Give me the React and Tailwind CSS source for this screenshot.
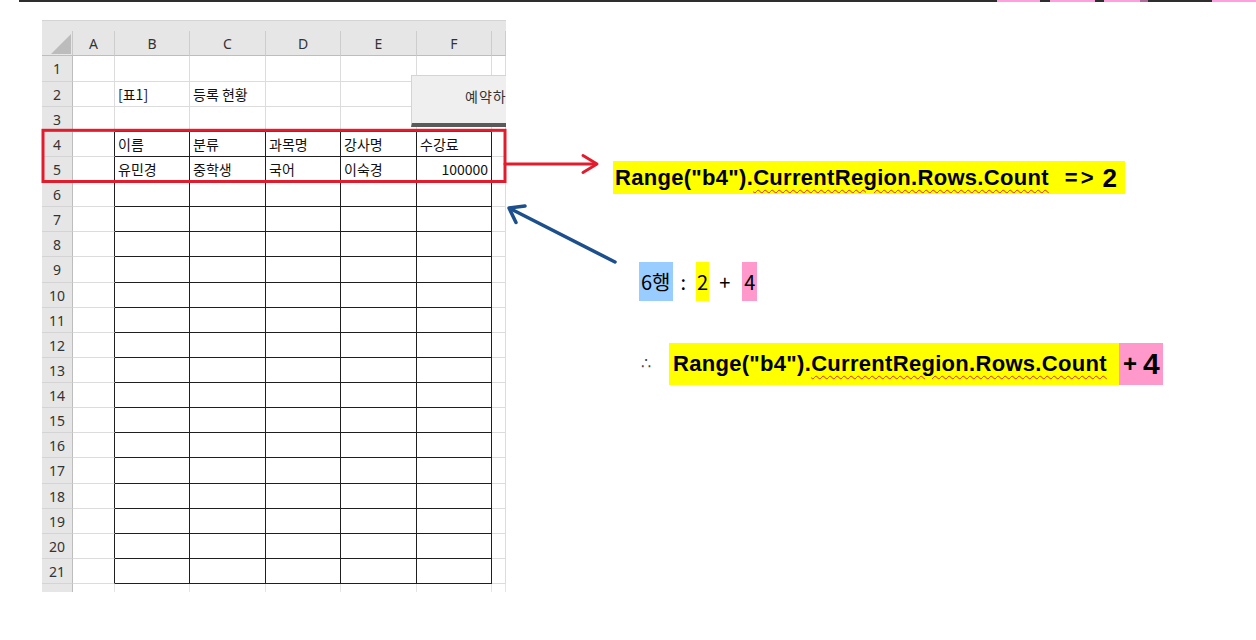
import React from 'react'

const COLS = ['A', 'B', 'C', 'D', 'E', 'F', '']
const ROWS = Array.from({ length: 21 }, (_, i) => i + 1)

// sheet contents keyed by "row-col" (col 0 = A)
const CELLS = {
  '2-1': { text: '[표1]' },
  '2-2': { text: '등록 현황' },
  '4-1': { text: '이름' },
  '4-2': { text: '분류' },
  '4-3': { text: '과목명' },
  '4-4': { text: '강사명' },
  '4-5': { text: '수강료' },
  '5-1': { text: '유민경' },
  '5-2': { text: '중학생' },
  '5-3': { text: '국어' },
  '5-4': { text: '이숙경' },
  '5-5': { text: '100000', right: true },
}

const GRID = 'grid grid-cols-[31px_42px_75px_76px_75px_76px_75px_1fr]'

const TopRule = () => (
  <div className="ml-[19px] flex h-[2px] w-[1237px]">
    <div className="w-[978px] bg-[#2e2e2e]" />
    <div className="w-[43px] bg-[#ff9fdf]" />
    <div className="w-[10px] bg-[#2e2e2e]" />
    <div className="w-[45px] bg-[#ff9fdf]" />
    <div className="w-[9px] bg-[#2e2e2e]" />
    <div className="w-[36px] bg-[#ff9fdf]" />
    <div className="w-[8px] bg-[#b06a98]" />
    <div className="w-[64px] bg-[#2e2e2e]" />
    <div className="flex-1 bg-[#ff9fdf]" />
  </div>
)

const Cell = ({ r, c }) => {
  const inBox = r >= 4 && c >= 1 && c <= 5
  const rightDark = inBox || (r >= 4 && c === 0)
  const bottomDark = inBox || (r === 3 && c >= 1 && c <= 5)
  const cell = CELLS[`${r}-${c}`]
  return (
    <div
      className={`flex items-center overflow-visible whitespace-nowrap border-r border-b ${
        rightDark ? 'border-r-[#1f1f1f]' : 'border-r-[#dcdcdc]'
      } ${bottomDark ? 'border-b-[#1f1f1f]' : 'border-b-[#dcdcdc]'} ${
        cell?.right ? 'justify-end pr-[3px]' : 'pl-[3px]'
      }`}
    >
      {cell && <span className="text-[14px] text-[#111]">{cell.text}</span>}
    </div>
  )
}

const Sheet = () => (
  <div className="relative ml-[42px] w-[464px] shrink-0 overflow-hidden font-['Noto_Sans_CJK_KR',sans-serif]">
    <div className="h-[11px] border-t border-[#d4d4d4] bg-[#e6e6e6]" />

    {/* column letters */}
    <div className={`${GRID} h-[25px] bg-[#e6e6e6]`}>
      <div className="relative border-r border-b border-r-[#c8c8c8] border-b-[#bdbdbd]">
        <svg className="absolute right-[1px] bottom-[1px]" width="20" height="20" viewBox="0 0 20 20">
          <polygon points="20,0 20,20 0,20" fill="#bcbcbc" />
        </svg>
      </div>
      {COLS.map((col, i) => (
        <div
          key={i}
          className="flex items-center justify-center border-r border-b border-r-[#cdcdcd] border-b-[#bdbdbd] font-['Noto_Sans',sans-serif] text-[14px] text-[#333]"
        >
          {col}
        </div>
      ))}
    </div>

    {ROWS.map((r) => (
      <div key={r} className={`${GRID} ${r === 1 || r === 9 || r === 17 ? 'h-[26px]' : 'h-[25px]'}`}>
        <div className="flex items-center justify-center border-r border-b border-r-[#bdbdbd] border-b-[#d4d4d4] bg-[#e6e6e6] font-['Noto_Sans',sans-serif] text-[14px] text-[#333]">
          {r}
        </div>
        {COLS.map((_, c) => (
          <Cell key={c} r={r} c={c} />
        ))}
      </div>
    ))}

    {/* cut-off row 22 */}
    <div className={`${GRID} h-[8px]`}>
      <div className="border-r border-r-[#bdbdbd] bg-[#e6e6e6]" />
      {COLS.map((_, c) => (
        <div key={c} className="border-r border-r-[#e4e4e4]" />
      ))}
    </div>

    {/* form button sitting over the cells, clipped by the sheet edge */}
    <div className="absolute left-[369px] top-[55px] flex h-[52px] w-[172px] items-center border border-b-[4px] border-[#d4d4d4] border-b-[#5a5a5a] bg-[#efefef] pb-[6px] pl-[53px]">
      <span className="text-[14px] tracking-[1px] text-[#333]">예약하기</span>
    </div>
  </div>
)

const Notes = () => (
  <div className="flex flex-1 flex-col items-start">
    <div className="ml-[107px] mt-[141px] flex h-[33px] w-[512px] items-center whitespace-pre bg-[#ffff00] pl-[2px] font-['Liberation_Sans',sans-serif] text-[22px] font-bold leading-none tracking-[0.3px] text-black">
      <span>Range("b4").</span>
      <span className="underline decoration-[#e0281e] decoration-wavy decoration-1 underline-offset-[4px]">
        CurrentRegion.Rows.Count
      </span>
      <span className="ml-[16px] tracking-[3px]">=&gt;</span>
      <span className="ml-[6px] text-[26px]">2</span>
    </div>

    <div className="ml-[133px] mt-[68px] flex h-[39px] items-center font-['Noto_Sans_CJK_KR',sans-serif] text-[20px] text-black">
      <span className="flex h-full items-center bg-[#99ccff] px-[2px]">6행</span>
      <span className="ml-[8px]">:</span>
      <span className="ml-[10px] flex h-full items-center bg-[#ffff00] px-[1px]">2</span>
      <span className="ml-[10px]">+</span>
      <span className="ml-[12px] flex h-full items-center bg-[#ff99cc] px-[2px]">4</span>
    </div>

    <div className="ml-[135px] mt-[42px] flex h-[42px] items-center font-['Liberation_Sans',sans-serif] text-[22px] font-bold leading-none text-black">
      <span className="w-[14px] font-['DejaVu_Sans',sans-serif] text-[16px] font-normal text-[#444]">∴</span>
      <div className="ml-[14px] flex h-full w-[450px] items-center whitespace-pre bg-[#ffff00] pl-[4px] tracking-[0.3px]">
        <span>Range("b4").</span>
        <span className="underline decoration-[#e0281e] decoration-wavy decoration-1 underline-offset-[4px]">
          CurrentRegion.Rows.Count
        </span>
      </div>
      <div className="flex h-full w-[44px] items-center bg-[#ff99cc] pl-[4px]">
        <span className="text-[24px]">+</span>
        <span className="ml-[6px] text-[30px]">4</span>
      </div>
    </div>
  </div>
)

const Arrows = () => (
  <svg className="pointer-events-none absolute left-0 top-0" width="1256" height="640" viewBox="0 0 1256 640">
    <rect x="43" y="130.3" width="462" height="51.2" fill="none" stroke="#e31c2d" strokeWidth="3" />
    <g stroke="#e31c2d" strokeWidth="3" fill="none" strokeLinecap="round" strokeLinejoin="round">
      <line x1="505" y1="164" x2="596" y2="164" />
      <polyline points="583,155.5 597,164 583,172.5" />
    </g>
    <g stroke="#1c4f8c" strokeWidth="3.5" fill="none" strokeLinecap="round" strokeLinejoin="round">
      <line x1="615" y1="262" x2="510" y2="208.5" />
      <polyline points="525,206 509,208 516,222.5" />
    </g>
  </svg>
)

export default function App() {
  return (
    <div className="relative h-[640px] w-[1256px] overflow-hidden bg-white">
      <TopRule />
      <div className="mt-[18px] flex">
        <Sheet />
        <Notes />
      </div>
      <Arrows />
    </div>
  )
}
